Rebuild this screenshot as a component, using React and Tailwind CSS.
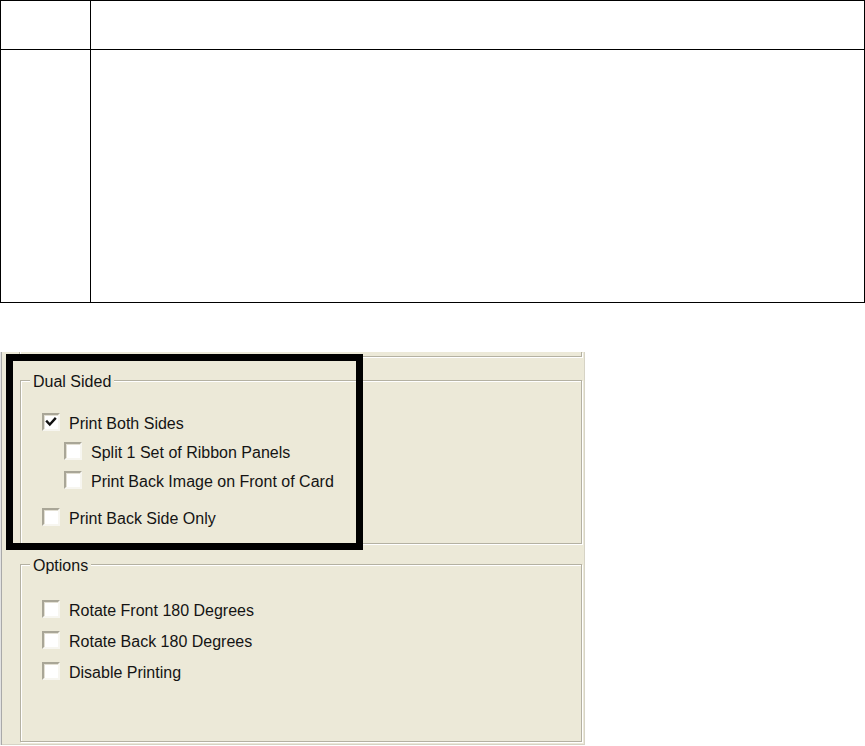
import React from "react";

const font = { fontFamily: '"Liberation Sans", Arial, sans-serif' };

function Box({ checked }) {
  return (
    <div className="relative w-[18px] h-[18px] shrink-0 bg-white border-2 border-t-[#a9a697] border-l-[#a9a697] border-b-[#f7f6f0] border-r-[#f7f6f0] shadow-[inset_1px_1px_0_#e2dfd3]">
      {checked && (
        <svg className="absolute left-[1px] top-[1px]" width="12" height="12" viewBox="0 0 12 12">
          <path d="M2 5.5 L4.8 8.5 L10 2.8" fill="none" stroke="#111" strokeWidth="2.4" strokeLinecap="square" />
        </svg>
      )}
    </div>
  );
}

function Row({ label, checked, indent, className = "" }) {
  return (
    <div className={`flex items-center h-[18px] gap-[9px] ${indent ? "pl-[22px]" : ""} ${className}`}>
      <Box checked={checked} />
      <span className="pt-[3px] text-[16px] leading-[18px] text-[#141414] whitespace-nowrap">{label}</span>
    </div>
  );
}

function Group({ title, className = "", children }) {
  return (
    <div className={`relative border border-[#b4b1a2] shadow-[1px_1px_0_#ffffff,inset_1px_1px_0_#ffffff] ${className}`}>
      <span className="absolute left-[9px] top-[-8px] px-[3px] bg-[#ECE9D8] text-[16px] leading-[18px] text-[#141414]">
        {title}
      </span>
      {children}
    </div>
  );
}

export default function App() {
  return (
    <div className="bg-white w-[865px] h-[746px] overflow-hidden flex flex-col" style={font}>
      <div className="w-[865px] border border-black flex flex-col">
        <div className="flex h-[49px] border-b border-black">
          <div className="w-[90px] border-r border-black" />
          <div className="flex-1" />
        </div>
        <div className="flex h-[252px]">
          <div className="w-[90px] border-r border-black" />
          <div className="flex-1" />
        </div>
      </div>

      <div className="relative mt-[49px] w-[585px] h-[393px] bg-[#ECE9D8] pl-[20px] pr-[3px] flex flex-col shadow-[inset_1px_0_0_#e2e2e2,inset_2px_0_0_#a9a9a9,inset_-1px_0_0_#d6d3c5,inset_0_-1px_0_#d6d3c5]">
        <div className="h-[5px] -ml-[1px] border-l border-r border-b border-[#b4b1a2] shadow-[1px_1px_0_#ffffff,inset_1px_0_0_#ffffff]" />

        <Group title="Dual Sided" className="mt-[23px] h-[164px]">
          <div className="pl-[21px] pt-[32px] flex flex-col">
            <Row label="Print Both Sides" checked />
            <Row label="Split 1 Set of Ribbon Panels" indent className="mt-[11px]" />
            <Row label="Print Back Image on Front of Card" indent className="mt-[11px]" />
            <Row label="Print Back Side Only" className="mt-[19px]" />
          </div>
        </Group>

        <Group title="Options" className="mt-[20px] h-[178px]">
          <div className="pl-[21px] pt-[35px] flex flex-col">
            <Row label="Rotate Front 180 Degrees" />
            <Row label="Rotate Back 180 Degrees" className="mt-[13px]" />
            <Row label="Disable Printing" className="mt-[13px]" />
          </div>
        </Group>

        <div className="absolute left-[6px] top-[2px] w-[357px] h-[196px] border-[7px] border-black" />
      </div>
    </div>
  );
}
